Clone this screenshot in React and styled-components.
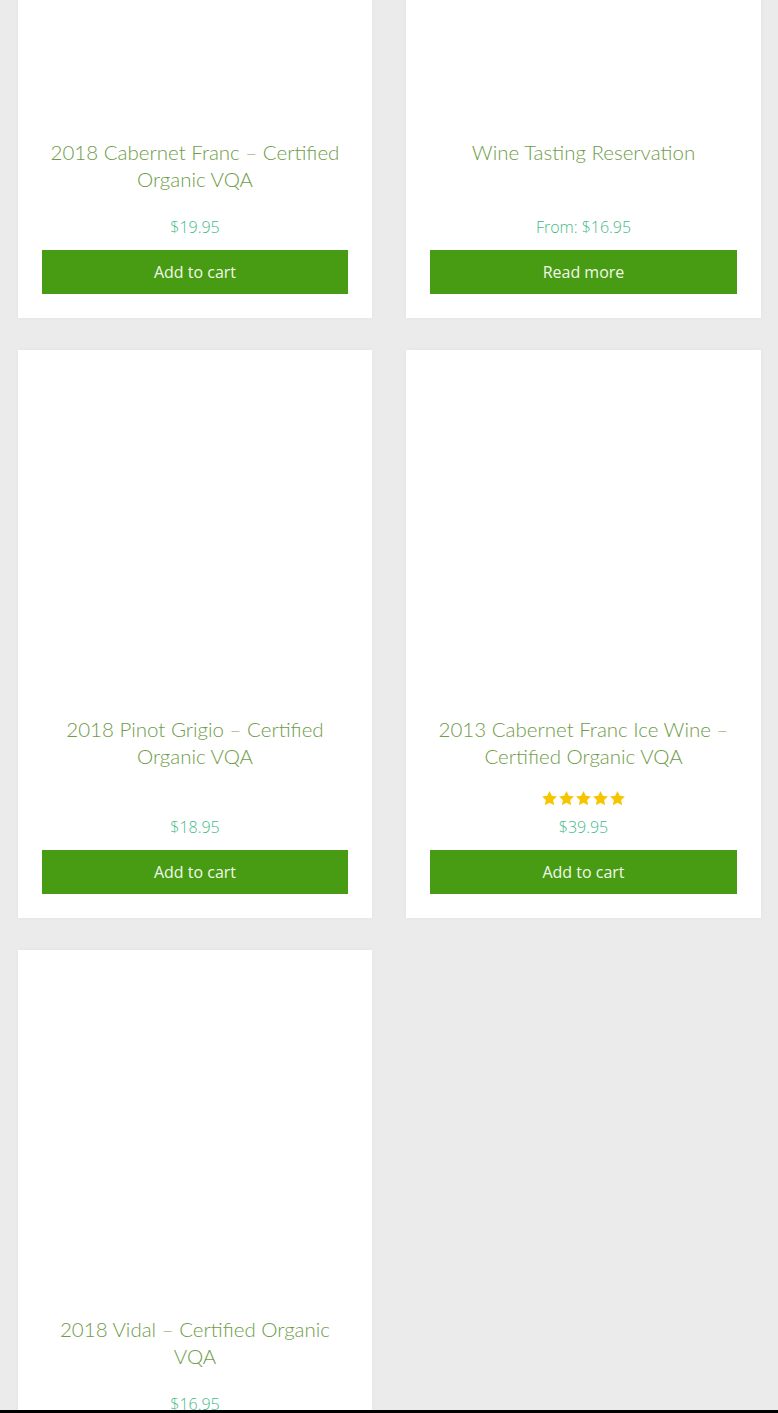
import styled, { createGlobalStyle } from "styled-components";

const GlobalStyle = createGlobalStyle`
  html, body {
    margin: 0;
    padding: 0;
    background: #ebebeb;
    overflow: hidden;
  }
`;

const products = [
  { name: "2018 Cabernet Franc – Certified Organic VQA", price: "$19.95", action: "Add to cart" },
  { name: "Wine Tasting Reservation", price: "$16.95", from: true, action: "Read more" },
  { name: "2018 Pinot Grigio – Certified Organic VQA", price: "$18.95", action: "Add to cart" },
  { name: "2013 Cabernet Franc Ice Wine – Certified Organic VQA", price: "$39.95", rating: 5, action: "Add to cart" },
  { name: "2018 Vidal – Certified Organic VQA", price: "$16.95", action: "Add to cart" },
];

const Star = () => (
  <svg width="17" height="17" viewBox="0 0 24 24">
    <path
      d="M12 1.5l3.2 6.7 7.3.9-5.4 5.1 1.4 7.3L12 18l-6.5 3.5 1.4-7.3-5.4-5.1 7.3-.9z"
      fill="#f7c500"
    />
  </svg>
);

const ProductCard = ({ product }) => (
  <Card>
    <Thumb />
    <Title>{product.name}</Title>
    <Bottom>
      {product.rating && (
        <Rating>
          {Array.from({ length: product.rating }).map((_, i) => (
            <Star key={i} />
          ))}
        </Rating>
      )}
      <Price>
        {product.from && "From: "}
        {product.price}
      </Price>
      <Button>{product.action}</Button>
    </Bottom>
  </Card>
);

const App = () => {
  return (
    <>
      <GlobalStyle />
      <Page>
        <Grid>
          {products.map((p) => (
            <ProductCard key={p.name} product={p} />
          ))}
        </Grid>
      </Page>
      <BottomBar />
    </>
  );
};

export default App;

const Page = styled.div`
  margin-top: -227px;
  padding: 0 17px 0 18px;
`;

const Grid = styled.div`
  display: grid;
  grid-template-columns: 354px 355px;
  column-gap: 34px;
  row-gap: 32px;
`;

const Card = styled.div`
  background: #fff;
  box-shadow: 0 0 4px rgba(0, 0, 0, 0.04);
  padding: 24px;
  display: flex;
  flex-direction: column;
  text-align: center;
`;

const Thumb = styled.div`
  height: 342px;
`;

const Title = styled.h2`
  margin: 0 0 22px;
  font-family: Lato, "Open Sans", sans-serif;
  font-weight: 300;
  font-size: 20.5px;
  line-height: 27px;
  color: #6f9c48;
  min-height: 54px;
`;

const Bottom = styled.div`
  margin-top: auto;
  display: flex;
  flex-direction: column;
  align-items: stretch;
`;

const Rating = styled.div`
  height: 24px;
  margin: -6px 0 5px;
  display: flex;
  justify-content: center;
  align-items: center;
`;

const Price = styled.div`
  font-family: "Open Sans", sans-serif;
  font-weight: 300;
  font-size: 16px;
  line-height: 24px;
  color: #3fba88;
  margin-bottom: 11px;
`;

const Button = styled.button`
  height: 44px;
  border: none;
  background: #479c13;
  color: #f2f8e8;
  font-family: "Open Sans", sans-serif;
  font-size: 16px;
  cursor: pointer;
`;

const BottomBar = styled.div`
  position: fixed;
  left: 0;
  right: 0;
  bottom: 0;
  height: 3px;
  background: #000;
`;
